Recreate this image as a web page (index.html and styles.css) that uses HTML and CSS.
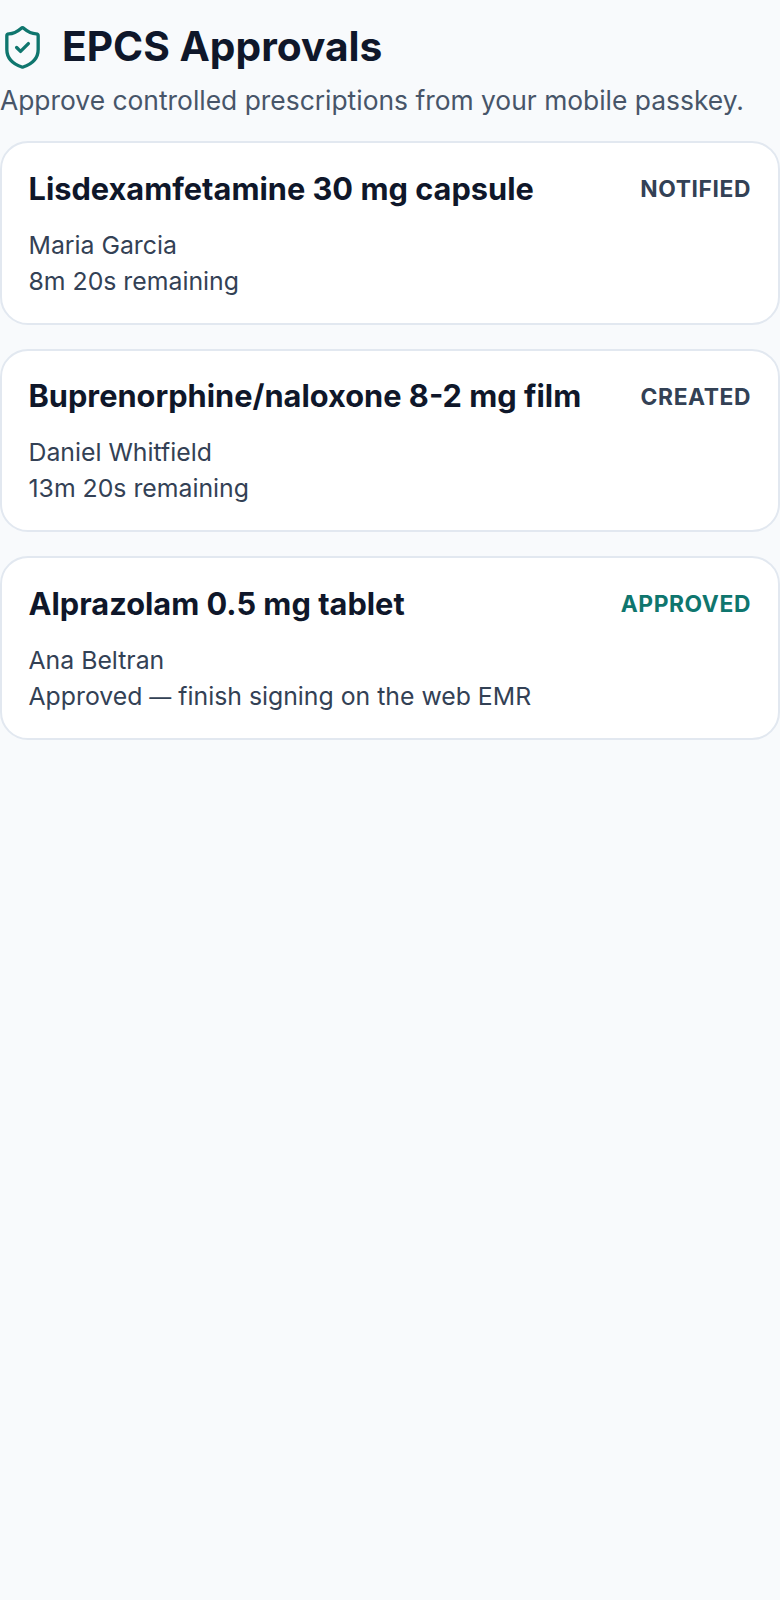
FILE: index.html
```html
<!DOCTYPE html>
<html lang="en">
<head>
<meta charset="utf-8">
<title>EPCS Approvals</title>
<link rel="stylesheet" href="styles.css">
</head>
<body>
<main class="page">
  <header class="head">
    <svg class="shield" width="47" height="47" viewBox="0 0 24 24" fill="none" stroke="#0f766e" stroke-width="1.7" stroke-linecap="round" stroke-linejoin="round">
      <path d="M20 13c0 5-3.5 7.5-7.66 8.95a1 1 0 0 1-.67-.01C7.5 20.5 4 18 4 13V6a1 1 0 0 1 1-1c2 0 4.5-1.2 6.24-2.72a1.17 1.17 0 0 1 1.52 0C14.51 3.81 17 5 19 5a1 1 0 0 1 1 1z"/>
      <path d="m9 12 2 2 4-4"/>
    </svg>
    <h1 class="title">EPCS Approvals</h1>
  </header>
  <p class="sub">Approve controlled prescriptions from your mobile passkey.</p>
  <section class="list">
    <article class="card">
      <div class="row"><h2 class="name">Lisdexamfetamine 30 mg capsule</h2><span class="status">NOTIFIED</span></div>
      <p class="meta">Maria Garcia</p>
      <p class="meta">8m 20s remaining</p>
    </article>
    <article class="card">
      <div class="row"><h2 class="name">Buprenorphine/naloxone 8-2 mg film</h2><span class="status">CREATED</span></div>
      <p class="meta">Daniel Whitfield</p>
      <p class="meta">13m 20s remaining</p>
    </article>
    <article class="card">
      <div class="row"><h2 class="name">Alprazolam 0.5 mg tablet</h2><span class="status ok">APPROVED</span></div>
      <p class="meta">Ana Beltran</p>
      <p class="meta">Approved <span class="dash">—</span> finish signing on the web EMR</p>
    </article>
  </section>
</main>
</body>
</html>
```
FILE: styles.css
```css
* { box-sizing: border-box; }
html, body { margin: 0; padding: 0; }
body { background: #f8fafc; font-family: Inter, "Liberation Sans", sans-serif; width: 780px; height: 1600px; overflow: hidden; }
.page { display: flex; flex-direction: column; }
.head { display: flex; align-items: center; gap: 16.5px; height: 48px; margin-top: 23px; }
.shield { flex: none; margin-left: -1.5px; }
.title { margin: 0; font-size: 40.7px; line-height: 48px; font-weight: 700; color: #0f172a; }
.sub { margin: 12px 0 0; font-size: 26.4px; line-height: 34px; color: #475569; }
.list { display: flex; flex-direction: column; gap: 24px; margin-top: 24px; }
.card { background: #fff; border: 2px solid #e2e8f0; border-radius: 28px; padding: 25.5px 27px 25.5px 26.5px; height: 183.5px; }
.row { display: flex; justify-content: space-between; align-items: center; margin-bottom: 18px; }
.name { margin: 0; font-size: 30.75px; line-height: 40px; font-weight: 700; color: #0f172a; }
.status { font-size: 22.8px; font-weight: 700; letter-spacing: 0.6px; color: #334155; }
.ok { color: #0f766e; }
.meta { margin: 0; font-size: 24.8px; line-height: 36px; color: #334155; }
.dash { font-size: 22px; }
```
